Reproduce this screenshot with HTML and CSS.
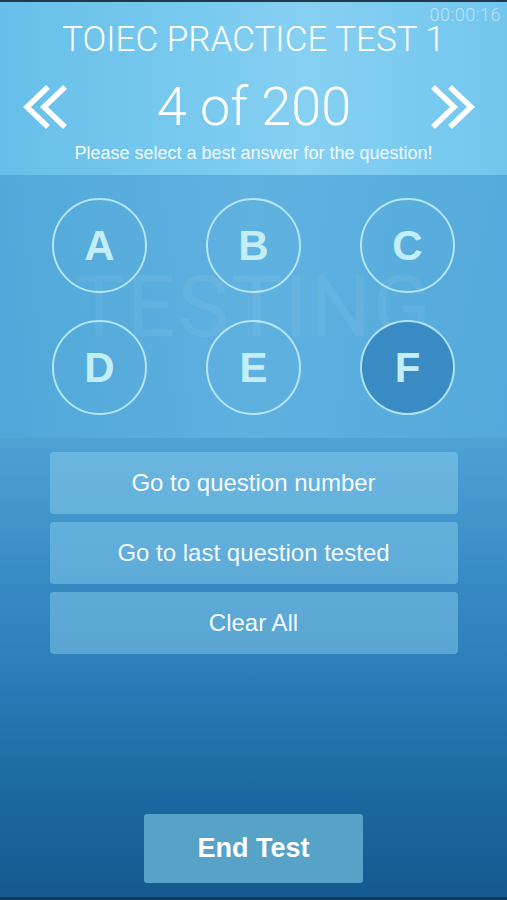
FILE: index.html
```html
<!DOCTYPE html>
<html>
<head>
<meta charset="utf-8">
<link rel="stylesheet" href="styles.css">
</head>
<body>
<div class="app">
  <header class="header">
    <div class="timer">00:00:16</div>
    <h1 class="title">TOIEC PRACTICE TEST 1</h1>
    <div class="nav">
      <svg class="chev" viewBox="0 0 44 44" width="44" height="44"><path d="M25 2 L4 22 L25 42 M42 2 L21 22 L42 42"/></svg>
      <div class="count">4 of 200</div>
      <svg class="chev" viewBox="0 0 44 44" width="44" height="44"><path d="M2 2 L23 22 L2 42 M19 2 L40 22 L19 42"/></svg>
    </div>
    <p class="hint">Please select a best answer for the question!</p>
  </header>
  <section class="answers">
    <div class="watermark">TESTING</div>
    <div class="row">
      <div class="opt">A</div>
      <div class="opt">B</div>
      <div class="opt">C</div>
    </div>
    <div class="row">
      <div class="opt">D</div>
      <div class="opt">E</div>
      <div class="opt selected">F</div>
    </div>
  </section>
  <section class="actions">
    <div class="btn">Go to question number</div>
    <div class="btn">Go to last question tested</div>
    <div class="btn">Clear All</div>
  </section>
  <div class="spacer"></div>
  <footer class="footer">
    <div class="end">End Test</div>
  </footer>
</div>
</body>
</html>
```
FILE: styles.css
```css
html, body {
  margin: 0;
  padding: 0;
}
body {
  font-family: "Liberation Sans", Arial, sans-serif;
  color: #fff;
}
.app {
  height: 900px;
  box-sizing: border-box;
  border-top: 2px solid #22394a;
  border-bottom: 3px solid #163a57;
  display: flex;
  flex-direction: column;
  background: linear-gradient(180deg, #6cc1ea 0px, #5cb1df 200px, #4da1d3 440px, #3a8ec6 560px, #2a7cb6 680px, #1d68a1 790px, #145a90 895px);
  overflow: hidden;
}
.header {
  position: relative;
  height: 173px;
  box-sizing: border-box;
  padding-top: 22px;
  background: linear-gradient(90deg, #66bfe9 0%, #7ccbf0 45%, #86d0f2 60%, #72c6ee 100%);
  text-align: center;
}
.timer {
  position: absolute;
  top: 4px;
  right: 6px;
  font-family: Roboto, "Liberation Sans", sans-serif;
  font-weight: 300;
  font-size: 18px;
  line-height: 18px;
  letter-spacing: 0.5px;
  color: rgba(255, 255, 255, 0.5);
}
.title {
  margin: 0;
  font-family: Roboto, "Liberation Sans", sans-serif;
  font-weight: 300;
  font-size: 35px;
  line-height: 32px;
}
.nav {
  display: flex;
  align-items: center;
  justify-content: space-between;
  padding: 0 32px 0 23px;
  margin-top: 28px;
  height: 46px;
}
.chev {
  fill: none;
  stroke: #fff;
  stroke-width: 5.5;
  stroke-linejoin: miter;
}
.count {
  font-family: Roboto, "Liberation Sans", sans-serif;
  font-weight: 300;
  font-size: 54px;
  line-height: 46px;
  margin-left: 10px;
}
.hint {
  margin: 13px 0 0;
  font-size: 18px;
  line-height: 20px;
  color: rgba(255, 255, 255, 0.92);
}
.answers {
  position: relative;
  height: 263px;
  box-sizing: border-box;
  padding-top: 23px;
  display: flex;
  flex-direction: column;
  gap: 27px;
  background: linear-gradient(90deg, rgba(80, 168, 218, 0.9) 0%, rgba(96, 178, 224, 0.9) 50%, rgba(84, 170, 220, 0.9) 100%);
}
.watermark {
  position: absolute;
  left: 0;
  right: 0;
  top: 118px;
  text-align: center;
  font-family: Roboto, "Liberation Sans", sans-serif;
  font-weight: 400;
  font-size: 86px;
  line-height: 27px;
  letter-spacing: 2px;
  color: rgba(255, 255, 255, 0.06);
}
.row {
  position: relative;
  display: flex;
  justify-content: center;
  gap: 59px;
}
.opt {
  width: 95px;
  height: 95px;
  box-sizing: border-box;
  border: 2px solid rgba(195, 240, 250, 0.85);
  border-radius: 50%;
  display: flex;
  align-items: center;
  justify-content: center;
  font-weight: bold;
  font-size: 42px;
  color: #c3eef7;
}
.opt.selected {
  background: #3a8bc4;
}
.actions {
  display: flex;
  flex-direction: column;
  align-items: center;
  gap: 8px;
  padding-top: 14px;
}
.btn {
  width: 408px;
  height: 62px;
  border-radius: 4px;
  background: rgba(145, 210, 242, 0.45);
  display: flex;
  align-items: center;
  justify-content: center;
  font-size: 24px;
  color: rgba(255, 255, 255, 0.95);
}
.spacer {
  flex: 1;
}
.footer {
  display: flex;
  justify-content: center;
  padding-bottom: 14px;
}
.end {
  width: 219px;
  height: 69px;
  border-radius: 3px;
  background: #56a3c7;
  display: flex;
  align-items: center;
  justify-content: center;
  font-weight: bold;
  font-size: 27px;
  color: #fff;
}
```
